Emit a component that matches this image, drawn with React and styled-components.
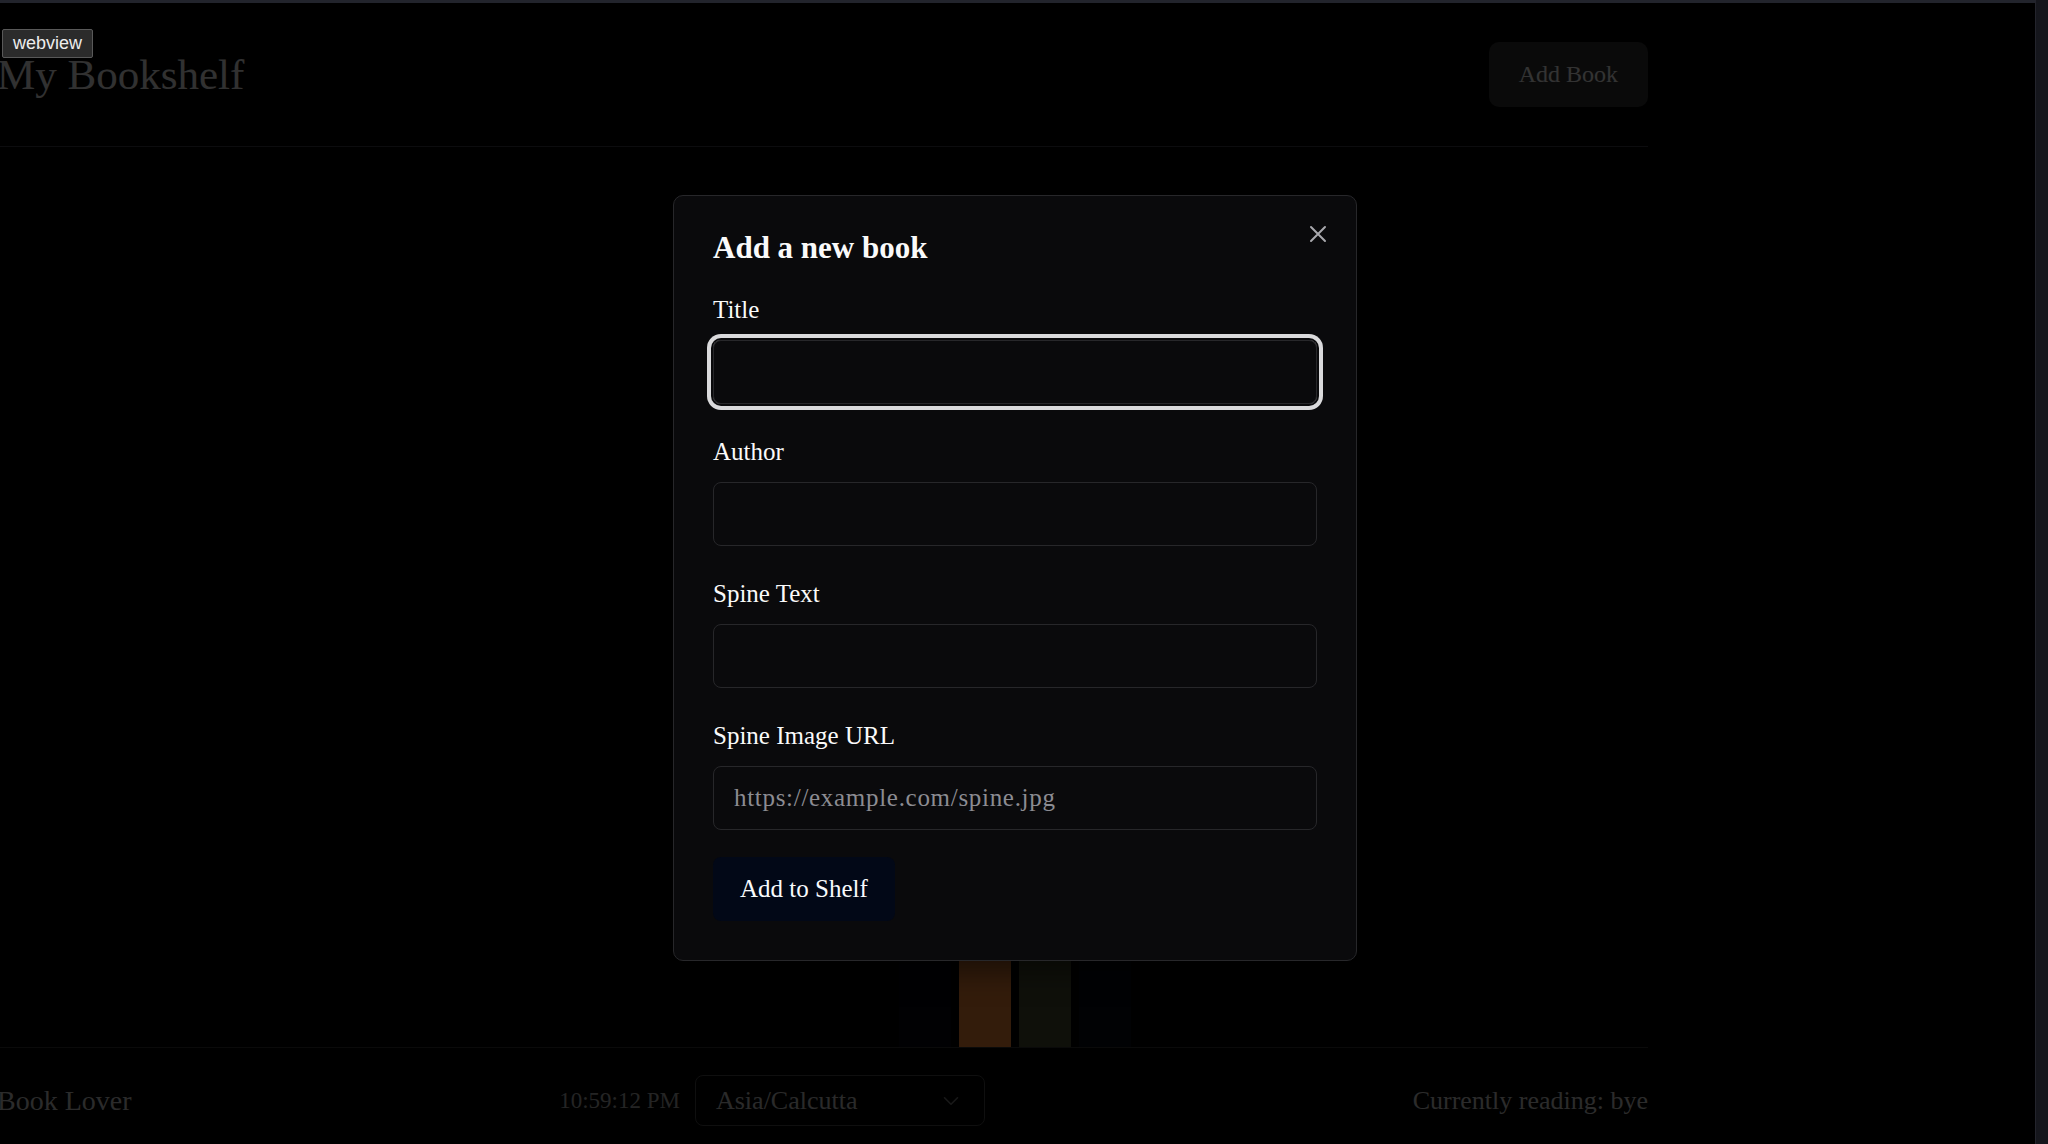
import React from "react";
import styled, { createGlobalStyle } from "styled-components";
import { ChevronDown } from "lucide-react";

const GlobalStyle = createGlobalStyle`
    * {
        box-sizing: border-box;
    }

    html, body {
        margin: 0;
        padding: 0;
        background: #000;
        overflow: hidden;
    }

    body {
        font-family: "Liberation Serif", "Times New Roman", serif;
    }
`;

const Frame = styled.div`
    position: relative;
    display: flex;
    width: 2048px;
    height: 1144px;
    background: #000;
    overflow: hidden;
`;

const Window = styled.div`
    flex: 1;
    min-width: 0;
    display: flex;
    flex-direction: column;
`;

const TopStrip = styled.div`
    height: 3px;
    background: #22242c;
`;

const ScrollTrack = styled.div`
    width: 13px;
    background: #15161c;
    border-left: 1px solid #23242c;
`;

const Viewport = styled.div`
    position: relative;
    flex: 1;
    overflow: hidden;
    background: #000;
`;

const WebviewTag = styled.div`
    position: absolute;
    top: 29px;
    left: 2px;
    z-index: 20;
    height: 29px;
    padding: 0 10px;
    display: flex;
    align-items: center;
    background: #2b2b2b;
    border: 1px solid #595959;
    border-radius: 2px;
    color: #ededed;
    font-family: "Liberation Sans", Arial, sans-serif;
    font-size: 18px;
`;

const Header = styled.header`
    width: 1651px;
    margin-left: -3px;
    padding: 39px 0;
    display: flex;
    align-items: center;
    justify-content: space-between;
    border-bottom: 1px solid #3f3f46;
`;

const PageTitle = styled.h1`
    margin: 0;
    font-size: 43px;
    font-weight: 400;
    color: #f4f4f5;
`;

const HeaderButton = styled.button`
    height: 65px;
    padding: 0 30px;
    border: none;
    border-radius: 10px;
    background: #333;
    color: #fff;
    font-family: inherit;
    font-size: 24px;
`;

const Shelf = styled.main`
    height: 900px;
    padding-right: 5px;
    display: flex;
    align-items: flex-end;
    justify-content: center;
    gap: 8px;
`;

const Book = styled.div`
    width: 52px;
    height: ${({ $h }) => $h}px;
    background: ${({ $color }) => $color};
`;

const Footer = styled.footer`
    width: 1651px;
    margin-left: -3px;
    padding: 27px 0;
    display: flex;
    align-items: center;
    justify-content: space-between;
    border-top: 1px solid #333;
    font-size: 26px;
    color: #d4d4d4;
`;

const FooterText = styled.span`
    white-space: nowrap;
    font-size: ${({ $size }) => $size || 26}px;
`;

const FooterCenter = styled.div`
    display: flex;
    align-items: center;
    gap: 15px;
`;

const Clock = styled.span`
    font-size: 23px;
    color: #b4b4b4;
`;

const ZoneSelect = styled.div`
    width: 290px;
    height: 51px;
    padding: 0 20px;
    display: flex;
    align-items: center;
    justify-content: space-between;
    border: 1px solid #4a4a4a;
    border-radius: 8px;
    color: #cfcfcf;
    font-size: 26px;

    svg {
        opacity: 0.6;
    }
`;

const Overlay = styled.div`
    position: absolute;
    inset: 0;
    z-index: 10;
    display: flex;
    align-items: center;
    justify-content: center;
    background: rgba(0, 0, 0, 0.8);
`;

const Dialog = styled.div`
    position: relative;
    width: 684px;
    margin: 9px 5px 0 0;
    padding: 33px 39px 39px;
    background: #0a0a0c;
    border: 1px solid #27272a;
    border-radius: 10px;
    box-shadow: 0 10px 30px rgba(0, 0, 0, 0.5);
`;

const DialogTitle = styled.h2`
    margin: 0;
    font-size: 31px;
    font-weight: 700;
    line-height: 1.2;
    color: #fafafa;
`;

const CloseButton = styled.button`
    position: absolute;
    top: 29px;
    right: 29px;
    width: 18px;
    height: 18px;
    padding: 0;
    display: flex;
    border: none;
    background: none;
    color: #a8a8ad;
`;

const Form = styled.form`
    margin-top: 25px;
    display: flex;
    flex-direction: column;
    gap: 30px;
`;

const Field = styled.div`
    display: flex;
    flex-direction: column;
    gap: 12px;
`;

const Label = styled.label`
    font-size: 25px;
    line-height: 36px;
    color: #fafafa;
`;

const Input = styled.input`
    width: 100%;
    height: 64px;
    padding: 0 20px;
    border: 1px solid #27272a;
    border-radius: 8px;
    background: transparent;
    color: #fafafa;
    font-family: inherit;
    font-size: 25px;
    letter-spacing: 0.7px;
    outline: none;
    box-shadow: ${({ $focused }) => $focused ? '0 0 0 2px #0a0a0c, 0 0 0 6px #dadadc' : 'none'};

    &::placeholder {
        color: #8c8c92;
    }
`;

const SubmitButton = styled.button`
    align-self: flex-start;
    height: 64px;
    margin-top: -3px;
    padding: 0 27px;
    border: none;
    border-radius: 8px;
    background: #020817;
    color: #f8fafc;
    font-family: inherit;
    font-size: 25px;
`;

const books = [
    { color: '#05080f', h: 240 },
    { color: '#ff8a3a', h: 300 },
    { color: '#4e4f33', h: 270 },
    { color: '#060a18', h: 250 },
];

const fields = [
    { label: 'Title', focused: true },
    { label: 'Author' },
    { label: 'Spine Text' },
    { label: 'Spine Image URL', placeholder: 'https://example.com/spine.jpg' },
];

const App = () => {
    return (
        <Frame>
            <GlobalStyle />
            <WebviewTag>webview</WebviewTag>
            <Window>
                <TopStrip />
                <Viewport>
                    <Header>
                        <PageTitle>My Bookshelf</PageTitle>
                        <HeaderButton>Add Book</HeaderButton>
                    </Header>
                    <Shelf>
                        {books.map((book, index) => (
                            <Book key={index} $color={book.color} $h={book.h} />
                        ))}
                    </Shelf>
                    <Footer>
                        <FooterText $size={28}>Book Lover</FooterText>
                        <FooterCenter>
                            <Clock>10:59:12 PM</Clock>
                            <ZoneSelect>
                                <span>Asia/Calcutta</span>
                                <ChevronDown size={26} strokeWidth={1.5} />
                            </ZoneSelect>
                        </FooterCenter>
                        <FooterText>Currently reading: bye</FooterText>
                    </Footer>

                    <Overlay>
                        <Dialog>
                            <DialogTitle>Add a new book</DialogTitle>
                            <CloseButton aria-label="Close">
                                <svg width="18" height="18" viewBox="0 0 18 18" fill="none" stroke="currentColor" strokeWidth="2" strokeLinecap="round">
                                    <path d="M2 2 L16 16 M16 2 L2 16" />
                                </svg>
                            </CloseButton>
                            <Form onSubmit={(e) => e.preventDefault()}>
                                {fields.map((field) => (
                                    <Field key={field.label}>
                                        <Label>{field.label}</Label>
                                        <Input $focused={field.focused} placeholder={field.placeholder} />
                                    </Field>
                                ))}
                                <SubmitButton type="submit">Add to Shelf</SubmitButton>
                            </Form>
                        </Dialog>
                    </Overlay>
                </Viewport>
            </Window>
            <ScrollTrack />
        </Frame>
    );
};

export default App;
